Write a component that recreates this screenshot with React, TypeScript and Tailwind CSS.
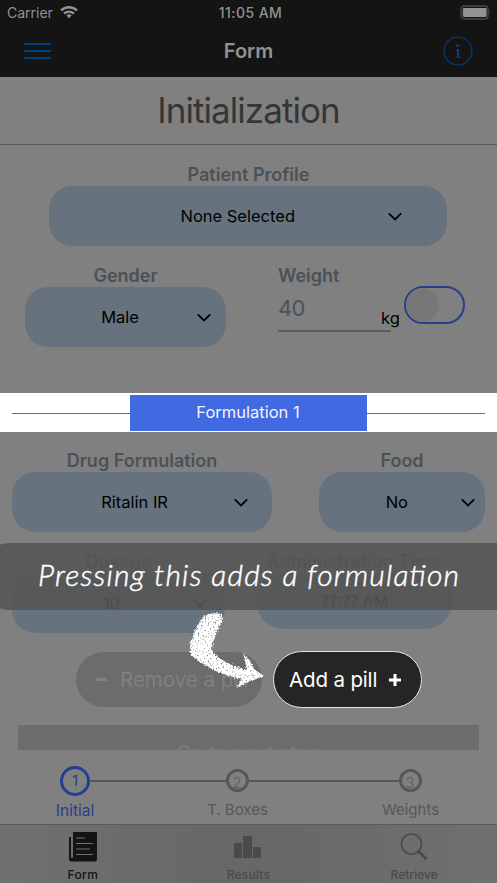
import React from "react";

type TextProps = { children: React.ReactNode; className?: string };

function Label({ children, className = "" }: TextProps) {
  return (
    <div className={`flex h-[22px] items-center justify-center whitespace-nowrap pb-[2px] text-[18px] font-semibold text-[#4a5258] ${className}`}>
      {children}
    </div>
  );
}

function Chevron({ className = "" }: { className?: string }) {
  return (
    <svg className={`h-[9px] w-[14px] shrink-0 ${className}`} viewBox="0 0 14 9" fill="none" stroke="currentColor" strokeWidth="1.800">
      <path d="M.8 1.400 7 7.400l6.200-6" />
    </svg>
  );
}

function Select({ value, className = "", gap = "" }: { value: string; className?: string; gap?: string }) {
  return (
    <div className={`flex h-[60px] items-center justify-end rounded-[23px] bg-[#66737e] text-[16.500px] text-black ${className}`}>
      <span className="whitespace-nowrap">{value}</span>
      <Chevron className={gap} />
    </div>
  );
}

function Header() {
  return (
    <header className="h-[77px] bg-[#141414] text-[#929292]">
      <div className="grid h-[25px] grid-cols-3 items-center px-[7px]">
        <div className="flex items-center gap-[7px] text-[14px]">
          <span>Carrier</span>
          <svg className="h-[13px] w-[18px]" viewBox="0 0 18 13" fill="none" stroke="currentColor" strokeWidth="2.400">
            <path d="M1 4.500C5.500.2 12.500.2 17 4.500" />
            <path d="M4 7.600c3-2.600 7-2.600 10 0" />
            <path d="M6.300 9.300c1.700-1.400 3.700-1.400 5.400 0L9 12.300Z" fill="currentColor" stroke="none" />
          </svg>
        </div>
        <div className="whitespace-nowrap pl-[4px] text-center text-[14px] font-medium tracking-[0.45px]">11:05 AM</div>
        <div className="flex justify-end">
          <svg className="-mr-[2px] h-[15px] w-[32px]" viewBox="0 0 32 15">
            <rect x="1" y="1" width="27" height="13" rx="3" fill="none" stroke="#4a4a4a" strokeWidth="1.300" />
            <rect x="2.800" y="3" width="23.800" height="9" rx="1.300" fill="#929292" />
            <path d="M29.500 5.500q2 2 0 4Z" fill="#4a4a4a" />
          </svg>
        </div>
      </div>
      <div className="flex h-[51px] items-center justify-between px-[24px]">
        <div className="flex w-[30px] flex-col gap-[5px]">
          <i className="h-[2px] w-[27px] bg-[#004080]" />
          <i className="h-[2px] w-[27px] bg-[#004080]" />
          <i className="h-[2px] w-[27px] bg-[#004080]" />
        </div>
        <div className="text-[20px] font-semibold">Form</div>
        <svg className="h-[30px] w-[30px]" viewBox="0 0 30 30" fill="none" stroke="#004080">
          <circle cx="15" cy="15" r="14" strokeWidth="1.100" />
          <circle cx="14.600" cy="9.400" r="1.500" fill="#004080" stroke="none" />
          <path d="M15 13v8" strokeWidth="2.200" />
          <path d="M12.800 13.500H15M12.600 21.300h4.900" strokeWidth="1" />
        </svg>
      </div>
    </header>
  );
}

function Stepper() {
  return (
    <div className="relative flex h-[74px] bg-[#808080] text-[15.500px] text-[#575757]">
      <div className="absolute left-[90px] top-[30px] h-[2px] w-[310px] bg-[#575757]" />
      <div className="relative ml-[35px] flex w-[80px] flex-col items-center pt-[16px] text-[#263e8c]">
        <div className="flex h-[30px] w-[30px] items-center justify-center rounded-full border-[3px] border-[#263e8c] bg-[#808080] text-[15px]">1</div>
        <span className="mt-[3px]">Initial</span>
      </div>
      <div className="relative ml-[82px] flex w-[80px] flex-col items-center pt-[19px]">
        <div className="flex h-[23px] w-[23px] items-center justify-center rounded-full border-[3px] border-[#575757] bg-[#808080] pt-[3px] text-[14px] font-light">2</div>
        <span className="mt-[7px] whitespace-nowrap pl-[1px] text-[15px]">T. Boxes</span>
      </div>
      <div className="relative ml-[93px] flex w-[80px] flex-col items-center pt-[19px]">
        <div className="flex h-[23px] w-[23px] items-center justify-center rounded-full border-[3px] border-[#575757] bg-[#808080] pt-[3px] text-[14px] font-light">3</div>
        <span className="mt-[7px] pl-px text-[15px]">Weights</span>
      </div>
    </div>
  );
}

function Tabs() {
  return (
    <nav className="grid h-[60px] grid-cols-3 border-t border-[#5a5a5a] bg-gradient-to-r from-[#707070] via-[#676767] to-[#707070] text-[12px] font-semibold text-[#4a4a4a]">
      <div className="flex flex-col items-center pt-[7px] text-[#141414]">
        <svg className="h-[30px] w-[28px]" viewBox="0 0 28 30">
          <path d="M4 0h24v27q0 2.500-2.500 2.500H2.500Q0 29.500 0 27V5h2v20q1 2.500 2 0Z" fill="currentColor" />
          <path d="M7 6h9M7 11.500h17M7 17h14M7 22.500h17" stroke="#707070" strokeWidth="1.200" />
        </svg>
        <span className="mt-[4px] font-medium tracking-[0.3px]">Form</span>
      </div>
      <div className="flex flex-col items-center pt-[7px]">
        <svg className="h-[30px] w-[28px]" viewBox="0 0 28 30" fill="currentColor">
          <path d="M0 11h8v15H0zM9 4h9v22H9zM19 15h8v11h-8z" />
        </svg>
        <span className="mt-[4px] font-medium tracking-[0.2px]">Results</span>
      </div>
      <div className="flex flex-col items-center pt-[7px]">
        <svg className="h-[30px] w-[28px]" viewBox="0 0 28 30" fill="none" stroke="currentColor">
          <circle cx="11.500" cy="12" r="10" strokeWidth="1.600" />
          <path d="m18 19 8.500 8" strokeWidth="3" />
        </svg>
        <span className="mt-[4px] font-medium">Retrieve</span>
      </div>
    </nav>
  );
}

function ChalkArrow() {
  return (
    <svg className="absolute left-[185px] top-[608px] h-[84px] w-[84px]" viewBox="185 608 84 84">
      <defs>
        <filter id="chalk" x="-10%" y="-10%" width="120%" height="120%">
          <feTurbulence type="fractalNoise" baseFrequency="0.6" numOctaves="3" seed="4" result="noise" />
          <feDisplacementMap in="SourceGraphic" in2="noise" scale="4" xChannelSelector="R" yChannelSelector="G" result="rough" />
          <feColorMatrix in="noise" type="matrix" values="0 0 0 0 1  0 0 0 0 1  0 0 0 0 1  0 0 0 -4 3.3" result="grain" />
          <feComposite in="rough" in2="grain" operator="in" />
        </filter>
      </defs>
      <path
        filter="url(#chalk)"
        fill="#ffffff"
        d="M204 616Q211 612 221 614L223 619Q216 632 213 643Q211 650 213 652Q222 663 247 670L243 653Q251 661 254 669L264 676Q250 681 237 688L241 679Q214 674 191 655Q188 647 193 636Q197 624 204 616Z"
      />
    </svg>
  );
}

export default function App() {
  return (
    <div className="relative flex h-[883px] w-[497px] flex-col overflow-hidden bg-[#808080] font-['Inter','Liberation_Sans',sans-serif]">
      <Header />
      <h1 className="flex h-[68px] items-center justify-center border-b border-[#5a5a5a] text-[35px] font-normal tracking-[-0.95px] text-[#353535]">
        Initialization
      </h1>

      <main className="h-[605px] shrink-0 overflow-hidden">
        <div className="h-[248px] pt-[19px]">
          <Label>Patient Profile</Label>
          <Select value="None Selected" className="ml-[49px] w-[398px] pr-[45px]" gap="ml-[93px]" />
          <div className="mt-[19px] flex">
            <div className="ml-[25px] w-[201px]">
              <Label>Gender</Label>
              <Select value="Male" className="pr-[15px]" gap="ml-[58px]" />
            </div>
            <div className="ml-[52px] w-[122px]">
              <Label className="!justify-start">Weight</Label>
              <div className="relative h-[45px] w-[113px] border-b-2 border-[#5b5b5b] pt-[5px] text-[22px] tracking-[-0.7px] text-[#4a5258]">
                40
                <span className="absolute left-[103px] top-[19px] text-[16.500px] tracking-normal text-black">kg</span>
              </div>
            </div>
            <div className="ml-[4px] mt-[21px] h-[38px] w-[61px] rounded-full border-[2.500px] border-[#263e8c] bg-[#808080]">
              <div className="h-[34px] w-[33px] rounded-full bg-[#777777]" />
            </div>
          </div>
        </div>

        <div className="flex h-[39px] items-center bg-white px-[12px]">
          <div className="mt-px h-px flex-1 bg-[#4169e1]" />
          <div className="flex h-[36px] w-[237px] items-center justify-center bg-[#4169e1] pr-px text-[16.500px] text-[#f2f4ff]">Formulation 1</div>
          <div className="mt-px h-px flex-1 bg-[#4169e1]" />
        </div>

        <div className="flex justify-between px-[12px] pt-[18px]">
          <div className="w-[260px]">
            <Label>Drug Formulation</Label>
            <Select value="Ritalin IR" className="pr-[24px]" gap="ml-[66px]" />
          </div>
          <div className="w-[166px]">
            <Label>Food</Label>
            <Select value="No" className="pr-[10px]" gap="ml-[53px]" />
          </div>
        </div>

        <div className="flex pl-[12px] pt-[19px]">
          <div className="w-[213px]">
            <Label>Dosage</Label>
            <Select value="10" className="pr-[18px]" gap="ml-[73px]" />
          </div>
          <div className="ml-[31px] w-[197px]">
            <Label className="text-[17.500px]">Administration Time</Label>
            <div className="flex h-[56px] items-center justify-center rounded-[28px] bg-[#66737e] text-[16px]">??:?? AM</div>
          </div>
        </div>

        <div className="flex pl-[76px] pt-[19px]">
          <div className="flex h-[55px] w-[186px] items-center rounded-full bg-[#6c6c6c] pl-[20px] text-[20.500px] text-[#808080]">
            <i className="h-[3px] w-[11px] bg-[#808080]" />
            <span className="ml-[13px] whitespace-nowrap pt-[2px]">Remove a pill</span>
          </div>
          <div className="-mt-px ml-[11px] flex h-[57px] w-[149px] items-center rounded-full border border-[#e5e5e5] bg-[#252525] pl-[15px] text-[20.500px] tracking-[-0.15px] text-white">
            <span className="whitespace-nowrap pt-[2px]">Add a pill</span>
            <svg className="ml-[12px] h-[12px] w-[12px]" viewBox="0 0 12 12" stroke="white" strokeWidth="3">
              <path d="M6 0v12M0 6h12" />
            </svg>
          </div>
        </div>

        <div className="mx-[18px] mt-[17px] flex h-[60px] justify-center bg-[#6b6d6f] pt-[13px] text-[20px] text-[#7c7c7c]">
          Go to next step
        </div>
      </main>

      <div className="absolute left-0 top-[750px] w-full">
        <Stepper />
        <Tabs />
      </div>

      <div className="absolute left-[-15px] top-[542.500px] h-[67px] w-[530px] rounded-l-[24px] bg-[#555555]/90" />
      <svg className="absolute left-0 top-[543px] h-[67px] w-[497px]" viewBox="0 0 497 67">
        <text
          x="38"
          y="42.500"
          textLength="421"
          fill="#ffffff"
          stroke="#ffffff"
          strokeWidth="0.500"
          className="font-['Lato',sans-serif] text-[30px] font-light italic"
        >
          Pressing this adds a formulation
        </text>
      </svg>
      <ChalkArrow />
    </div>
  );
}
